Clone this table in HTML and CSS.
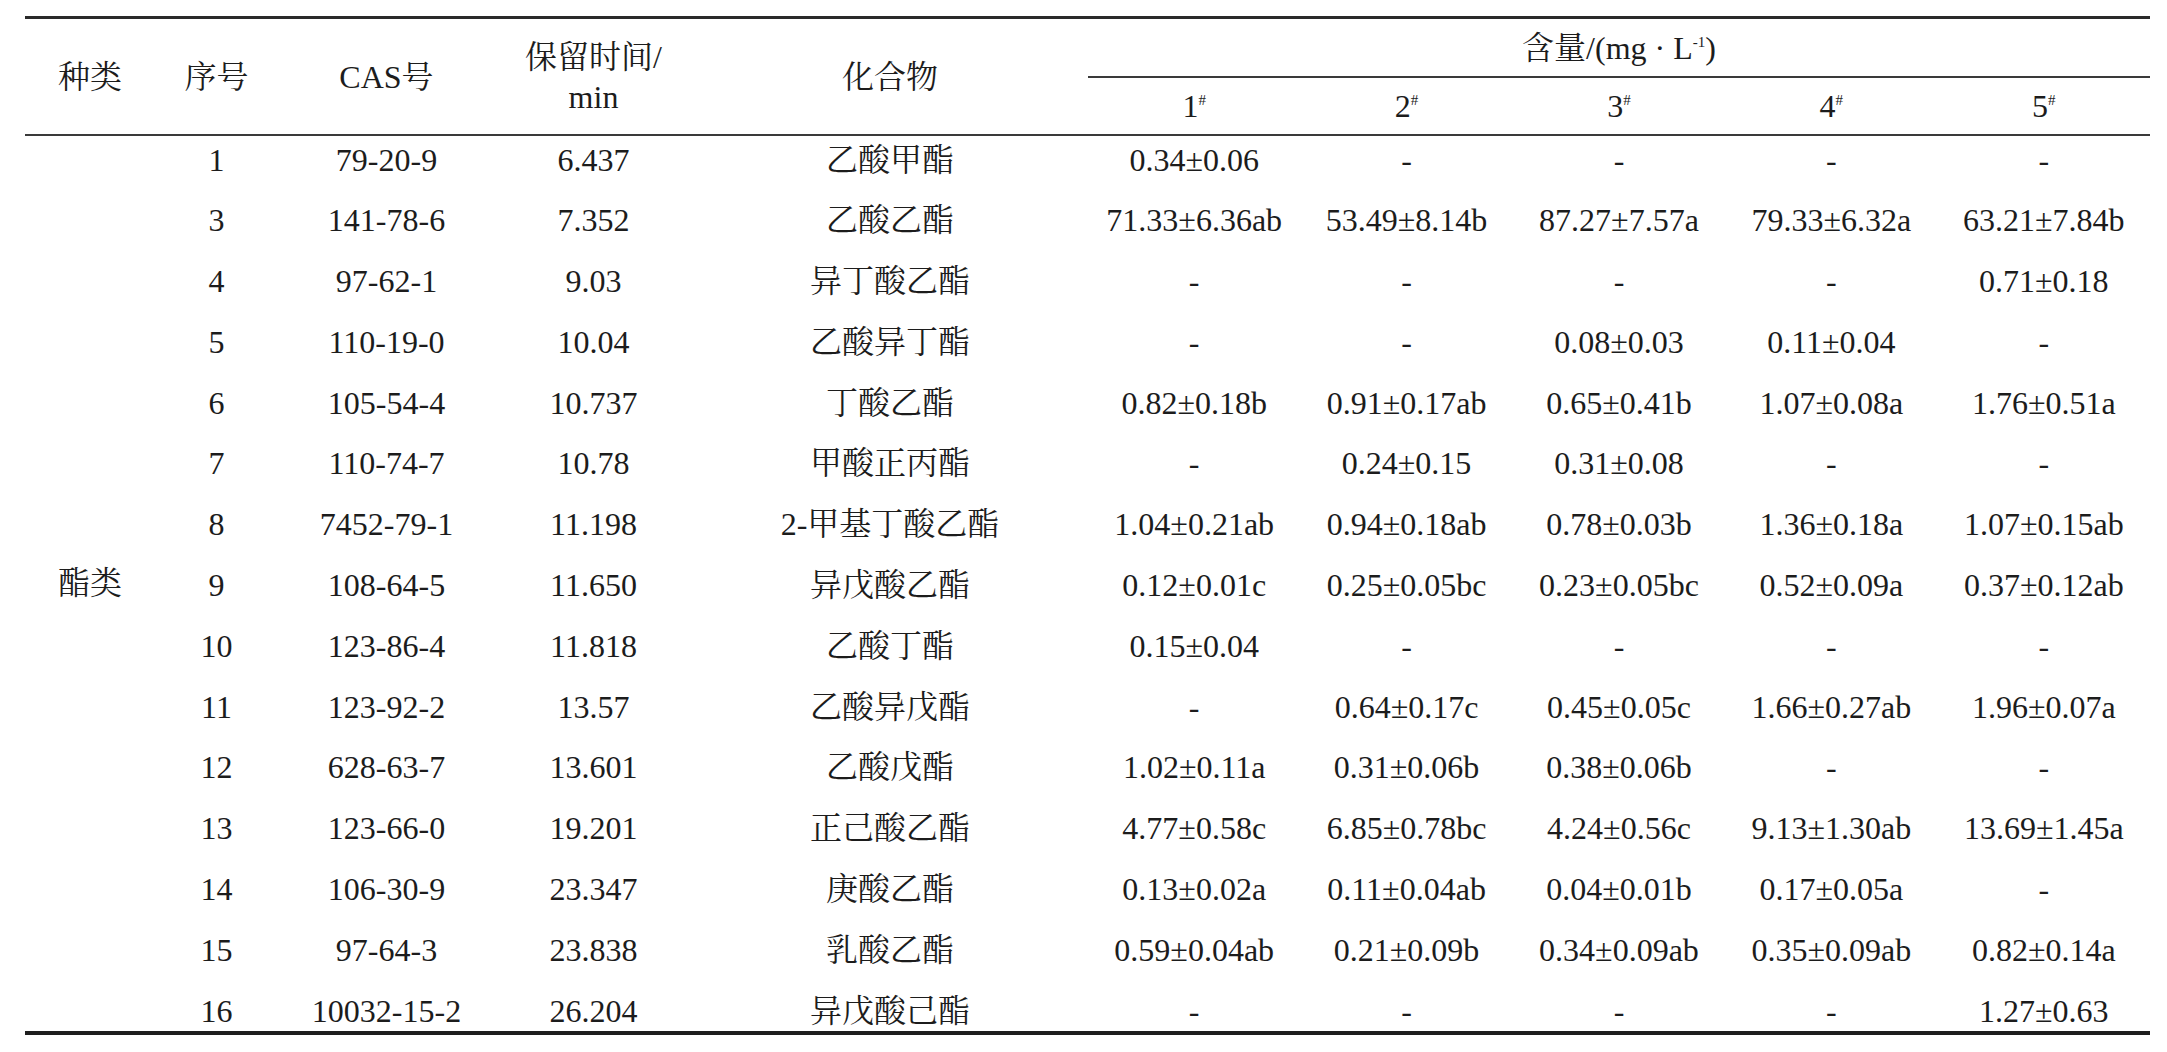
FILE: index.html
```html
<!DOCTYPE html>
<html lang="zh">
<head>
<meta charset="utf-8">
<title>酯类化合物含量</title>
<link rel="stylesheet" href="styles.css">
</head>
<body>
<div class="page">
<table class="data">
  <colgroup>
    <col class="c-kind"><col class="c-no"><col class="c-cas"><col class="c-rt"><col class="c-name">
    <col class="c-val"><col class="c-val"><col class="c-val"><col class="c-val"><col class="c-val">
  </colgroup>
  <thead>
    <tr class="hr1">
      <th rowspan="2" class="span2">种类</th>
      <th rowspan="2" class="span2">序号</th>
      <th rowspan="2" class="span2">CAS号</th>
      <th rowspan="2" class="span2 two">保留时间/<br>min</th>
      <th rowspan="2" class="span2">化合物</th>
      <th colspan="5" class="group">含量/(mg · L<span class="sup">-1</span>)</th>
    </tr>
    <tr class="hr2">
      <th class="sub">1<span class="sup">#</span></th>
      <th class="sub">2<span class="sup">#</span></th>
      <th class="sub">3<span class="sup">#</span></th>
      <th class="sub">4<span class="sup">#</span></th>
      <th class="sub">5<span class="sup">#</span></th>
    </tr>
  </thead>
  <tbody>
    <tr><td rowspan="15" class="kind">酯类</td><td>1</td><td>79-20-9</td><td>6.437</td><td>乙酸甲酯</td><td>0.34±0.06</td><td>-</td><td>-</td><td>-</td><td>-</td></tr>
    <tr><td>3</td><td>141-78-6</td><td>7.352</td><td>乙酸乙酯</td><td>71.33±6.36ab</td><td>53.49±8.14b</td><td>87.27±7.57a</td><td>79.33±6.32a</td><td>63.21±7.84b</td></tr>
    <tr><td>4</td><td>97-62-1</td><td>9.03</td><td>异丁酸乙酯</td><td>-</td><td>-</td><td>-</td><td>-</td><td>0.71±0.18</td></tr>
    <tr><td>5</td><td>110-19-0</td><td>10.04</td><td>乙酸异丁酯</td><td>-</td><td>-</td><td>0.08±0.03</td><td>0.11±0.04</td><td>-</td></tr>
    <tr><td>6</td><td>105-54-4</td><td>10.737</td><td>丁酸乙酯</td><td>0.82±0.18b</td><td>0.91±0.17ab</td><td>0.65±0.41b</td><td>1.07±0.08a</td><td>1.76±0.51a</td></tr>
    <tr><td>7</td><td>110-74-7</td><td>10.78</td><td>甲酸正丙酯</td><td>-</td><td>0.24±0.15</td><td>0.31±0.08</td><td>-</td><td>-</td></tr>
    <tr><td>8</td><td>7452-79-1</td><td>11.198</td><td>2-甲基丁酸乙酯</td><td>1.04±0.21ab</td><td>0.94±0.18ab</td><td>0.78±0.03b</td><td>1.36±0.18a</td><td>1.07±0.15ab</td></tr>
    <tr><td>9</td><td>108-64-5</td><td>11.650</td><td>异戊酸乙酯</td><td>0.12±0.01c</td><td>0.25±0.05bc</td><td>0.23±0.05bc</td><td>0.52±0.09a</td><td>0.37±0.12ab</td></tr>
    <tr><td>10</td><td>123-86-4</td><td>11.818</td><td>乙酸丁酯</td><td>0.15±0.04</td><td>-</td><td>-</td><td>-</td><td>-</td></tr>
    <tr><td>11</td><td>123-92-2</td><td>13.57</td><td>乙酸异戊酯</td><td>-</td><td>0.64±0.17c</td><td>0.45±0.05c</td><td>1.66±0.27ab</td><td>1.96±0.07a</td></tr>
    <tr><td>12</td><td>628-63-7</td><td>13.601</td><td>乙酸戊酯</td><td>1.02±0.11a</td><td>0.31±0.06b</td><td>0.38±0.06b</td><td>-</td><td>-</td></tr>
    <tr><td>13</td><td>123-66-0</td><td>19.201</td><td>正己酸乙酯</td><td>4.77±0.58c</td><td>6.85±0.78bc</td><td>4.24±0.56c</td><td>9.13±1.30ab</td><td>13.69±1.45a</td></tr>
    <tr><td>14</td><td>106-30-9</td><td>23.347</td><td>庚酸乙酯</td><td>0.13±0.02a</td><td>0.11±0.04ab</td><td>0.04±0.01b</td><td>0.17±0.05a</td><td>-</td></tr>
    <tr><td>15</td><td>97-64-3</td><td>23.838</td><td>乳酸乙酯</td><td>0.59±0.04ab</td><td>0.21±0.09b</td><td>0.34±0.09ab</td><td>0.35±0.09ab</td><td>0.82±0.14a</td></tr>
    <tr class="last"><td>16</td><td>10032-15-2</td><td>26.204</td><td>异戊酸己酯</td><td>-</td><td>-</td><td>-</td><td>-</td><td>1.27±0.63</td></tr>
  </tbody>
</table>
</div>
</body>
</html>
```

FILE: styles.css
```css
html, body {
  margin: 0;
  padding: 0;
  background: #ffffff;
}

.page {
  padding: 16px 0 0 25px;
  font-family: "Liberation Serif", "Noto Serif CJK SC", "Noto Sans CJK SC", serif;
  font-size: 32px;
  color: #1c1c1c;
}

.data {
  width: 2125px;
  table-layout: fixed;
  border-collapse: separate;
  border-spacing: 0;
}

.c-kind { width: 130px; }
.c-no { width: 123px; }
.c-cas { width: 217px; }
.c-rt { width: 197px; }
.c-name { width: 396px; }
.c-val { width: 212.4px; }

.data th,
.data td {
  box-sizing: border-box;
  padding: 0;
  text-align: center;
  font-weight: normal;
  white-space: nowrap;
  line-height: 36px;
}

.span2 {
  border-top: 3px solid #2a2a2a;
  border-bottom: 2px solid #3a3a3a;
  vertical-align: middle;
}

.two {
  line-height: 40px !important;
}

.group {
  height: 62px;
  border-top: 3px solid #2a2a2a;
  border-bottom: 2px solid #3a3a3a;
  vertical-align: middle;
  padding-top: 1px !important;
}

.sub {
  height: 58px;
  border-bottom: 2px solid #3a3a3a;
  vertical-align: middle;
}

.sup {
  font-size: 15px;
  vertical-align: 12px;
  line-height: 0;
}

.data tbody td {
  height: 60.8px;
  padding-top: 5.5px;
  vertical-align: top;
}

.data tbody td.kind {
  height: auto;
  padding-top: 0;
  vertical-align: middle;
  border-bottom: 4px solid #1e1e1e;
}

.data tbody tr.last td {
  height: 47.8px;
  border-bottom: 4px solid #1e1e1e;
}
```
